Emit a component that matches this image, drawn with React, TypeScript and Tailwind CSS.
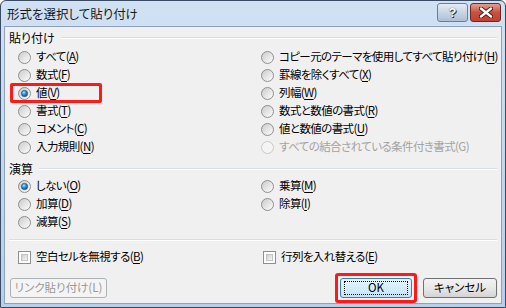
import React from "react";

const font = "[font-family:'Noto_Sans_CJK_JP','Liberation_Sans',sans-serif] [font-feature-settings:'palt']";

const Radio = ({ checked = false, disabled = false }: { checked?: boolean; disabled?: boolean }) => (
  <svg width="13" height="13" viewBox="0 0 13 13" className="shrink-0">
    <defs>
      <linearGradient id="rg" x1="0" y1="0" x2="1" y2="1">
        <stop offset="0" stopColor="#c9c9c9" />
        <stop offset="1" stopColor="#ffffff" />
      </linearGradient>
      <radialGradient id="bd" cx="0.4" cy="0.35" r="0.7">
        <stop offset="0" stopColor="#a9e0ff" />
        <stop offset="0.5" stopColor="#2a86c9" />
        <stop offset="1" stopColor="#0d4a87" />
      </radialGradient>
    </defs>
    <circle cx="6.5" cy="6.5" r="6" fill={disabled ? "#f4f4f4" : "url(#rg)"} stroke={disabled ? "#c8c8c8" : "#8f8f8f"} />
    {checked && <circle cx="6.5" cy="6.5" r="3.2" fill="url(#bd)" stroke="#1b5a96" strokeWidth="0.6" />}
  </svg>
);

const Check = () => (
  <span className="w-[13px] h-[13px] shrink-0 border border-[#8f8f8f] bg-white p-[2px]">
    <span className="block w-full h-full border border-[#c4c4c4] bg-linear-to-br from-[#cfcfcf] to-[#f6f6f6]" />
  </span>
);

const Label = ({ text, k, disabled }: { text: string; k: string; disabled?: boolean }) => (
  <span className={`whitespace-nowrap tracking-[-0.6px] ${disabled ? "text-[#a3a3a3]" : "text-black"}`}>
    {text}({disabled ? k : <u className="underline-offset-[2px]">{k}</u>})
  </span>
);

const RadioRow = ({ text, k, checked, disabled }: { text: string; k: string; checked?: boolean; disabled?: boolean }) => (
  <div className="h-[18px] flex items-center gap-[5px]">
    <Radio checked={checked} disabled={disabled} />
    <Label text={text} k={k} disabled={disabled} />
  </div>
);

const GroupTitle = ({ text }: { text: string }) => (
  <div className="h-[16px] flex items-center gap-[6px]">
    <span className="text-[12px]">{text}</span>
    <span className="flex-1 h-[2px] border-t border-[#d5dfe5] border-b border-b-white" />
  </div>
);

const Button = ({ children, disabled, main }: { children: React.ReactNode; disabled?: boolean; main?: boolean }) => (
  <div
    className={`h-[20px] rounded-[3px] border flex items-center justify-center whitespace-nowrap ${
      disabled
        ? "border-[#adb2b5] bg-[#f4f4f4] text-[#9a9a9a]"
        : main
        ? "border-[#3c7fb1] bg-linear-to-b from-[#eaf6fd] to-[#bee6fd] text-black"
        : "border-[#707070] bg-linear-to-b from-[#f2f2f2] via-[#e8e8e8] to-[#d4d4d4] text-black"
    }`}
  >
    {main ? (
      <span className="w-[calc(100%-6px)] h-[14px] border border-dotted border-black flex items-center justify-center">{children}</span>
    ) : (
      children
    )}
  </div>
);

export default function App() {
  return (
    <div className={`w-[506px] h-[308px] ${font} text-[11.5px] leading-none`}>
      <div className="w-full h-full border border-[#3a4b63] bg-linear-to-b from-[#d0e1f4] to-[#b7cfe9] flex flex-col px-[3px] pb-[3px] rounded-t-[6px]">
        <div className="h-[25px] flex items-center justify-between pl-[3px]">
          <span className="text-[12.5px] text-[#1a1a1a] mt-[1px]">形式を選択して貼り付け</span>
          <div className="flex gap-[2px] -mt-[2px] mr-[1px]">
            <div className="w-[31px] h-[19px] rounded-[3px] border border-[#6d7f96] bg-linear-to-b from-[#e3ecf6] to-[#aebfd4] flex items-center justify-center text-white font-bold text-[13px] [font-family:'Liberation_Sans',sans-serif] [text-shadow:0_0_1px_#333,1px_1px_0_#333]">
              ?
            </div>
            <div className="w-[31px] h-[19px] rounded-[3px] border border-[#6a2a24] bg-linear-to-b from-[#e39f90] via-[#c9503f] to-[#c4402f] flex items-center justify-center">
              <svg width="14" height="11" viewBox="0 0 14 11">
                <path d="M2 1.5 L12 9.5 M12 1.5 L2 9.5" stroke="#3c1a16" strokeWidth="4.2" strokeLinecap="round" />
                <path d="M2 1.5 L12 9.5 M12 1.5 L2 9.5" stroke="#ffffff" strokeWidth="2.4" strokeLinecap="round" />
              </svg>
            </div>
          </div>
        </div>
        <div className="flex-1 bg-[#f0f0f0] border border-[#8da2bd] flex flex-col pl-[4px] pr-[4px] pt-[3px]">
          <GroupTitle text="貼り付け" />
          <div className="grid grid-cols-[243px_1fr] pl-[9px] mt-[2px]">
            <div className="flex flex-col">
              <RadioRow text="すべて" k="A" />
              <RadioRow text="数式" k="F" />
              <div className="relative">
                <RadioRow text="値" k="V" checked />
                <div className="absolute left-[-8px] top-[-1px] w-[92px] h-[20px] border-[3px] border-[#ff1a1a] rounded-[2px]" />
              </div>
              <RadioRow text="書式" k="T" />
              <RadioRow text="コメント" k="C" />
              <RadioRow text="入力規則" k="N" />
            </div>
            <div className="flex flex-col">
              <RadioRow text="コピー元のテーマを使用してすべて貼り付け" k="H" />
              <RadioRow text="罫線を除くすべて" k="X" />
              <RadioRow text="列幅" k="W" />
              <RadioRow text="数式と数値の書式" k="R" />
              <RadioRow text="値と数値の書式" k="U" />
              <RadioRow text="すべての結合されている条件付き書式" k="G" disabled />
            </div>
          </div>
          <div className="mt-[5px]">
            <GroupTitle text="演算" />
          </div>
          <div className="grid grid-cols-[243px_1fr] pl-[9px]">
            <div className="flex flex-col">
              <RadioRow text="しない" k="O" checked />
              <RadioRow text="加算" k="D" />
              <RadioRow text="減算" k="S" />
            </div>
            <div className="flex flex-col">
              <RadioRow text="乗算" k="M" />
              <RadioRow text="除算" k="I" />
            </div>
          </div>
          <div className="mt-[8px] h-[2px] border-t border-[#d5dfe5] border-b border-b-white" />
          <div className="grid grid-cols-[245px_1fr] pl-[9px] mt-[7px]">
            <div className="h-[18px] flex items-center gap-[5px]">
              <Check />
              <Label text="空白セルを無視する" k="B" />
            </div>
            <div className="h-[18px] flex items-center gap-[5px]">
              <Check />
              <Label text="行列を入れ替える" k="E" />
            </div>
          </div>
          <div className="mt-[12px] flex items-center">
            <div className="w-[97px] ml-[1px]">
              <Button disabled>リンク貼り付け(L)</Button>
            </div>
            <div className="flex-1" />
            <div className="relative w-[72px]">
              <Button main>OK</Button>
              <div className="absolute left-[-5px] top-[-5px] w-[82px] h-[30px] border-[3px] border-[#ff1a1a] rounded-[3px]" />
            </div>
            <div className="w-[74px] ml-[11px] mr-[0px]">
              <Button>キャンセル</Button>
            </div>
          </div>
        </div>
      </div>
    </div>
  );
}
